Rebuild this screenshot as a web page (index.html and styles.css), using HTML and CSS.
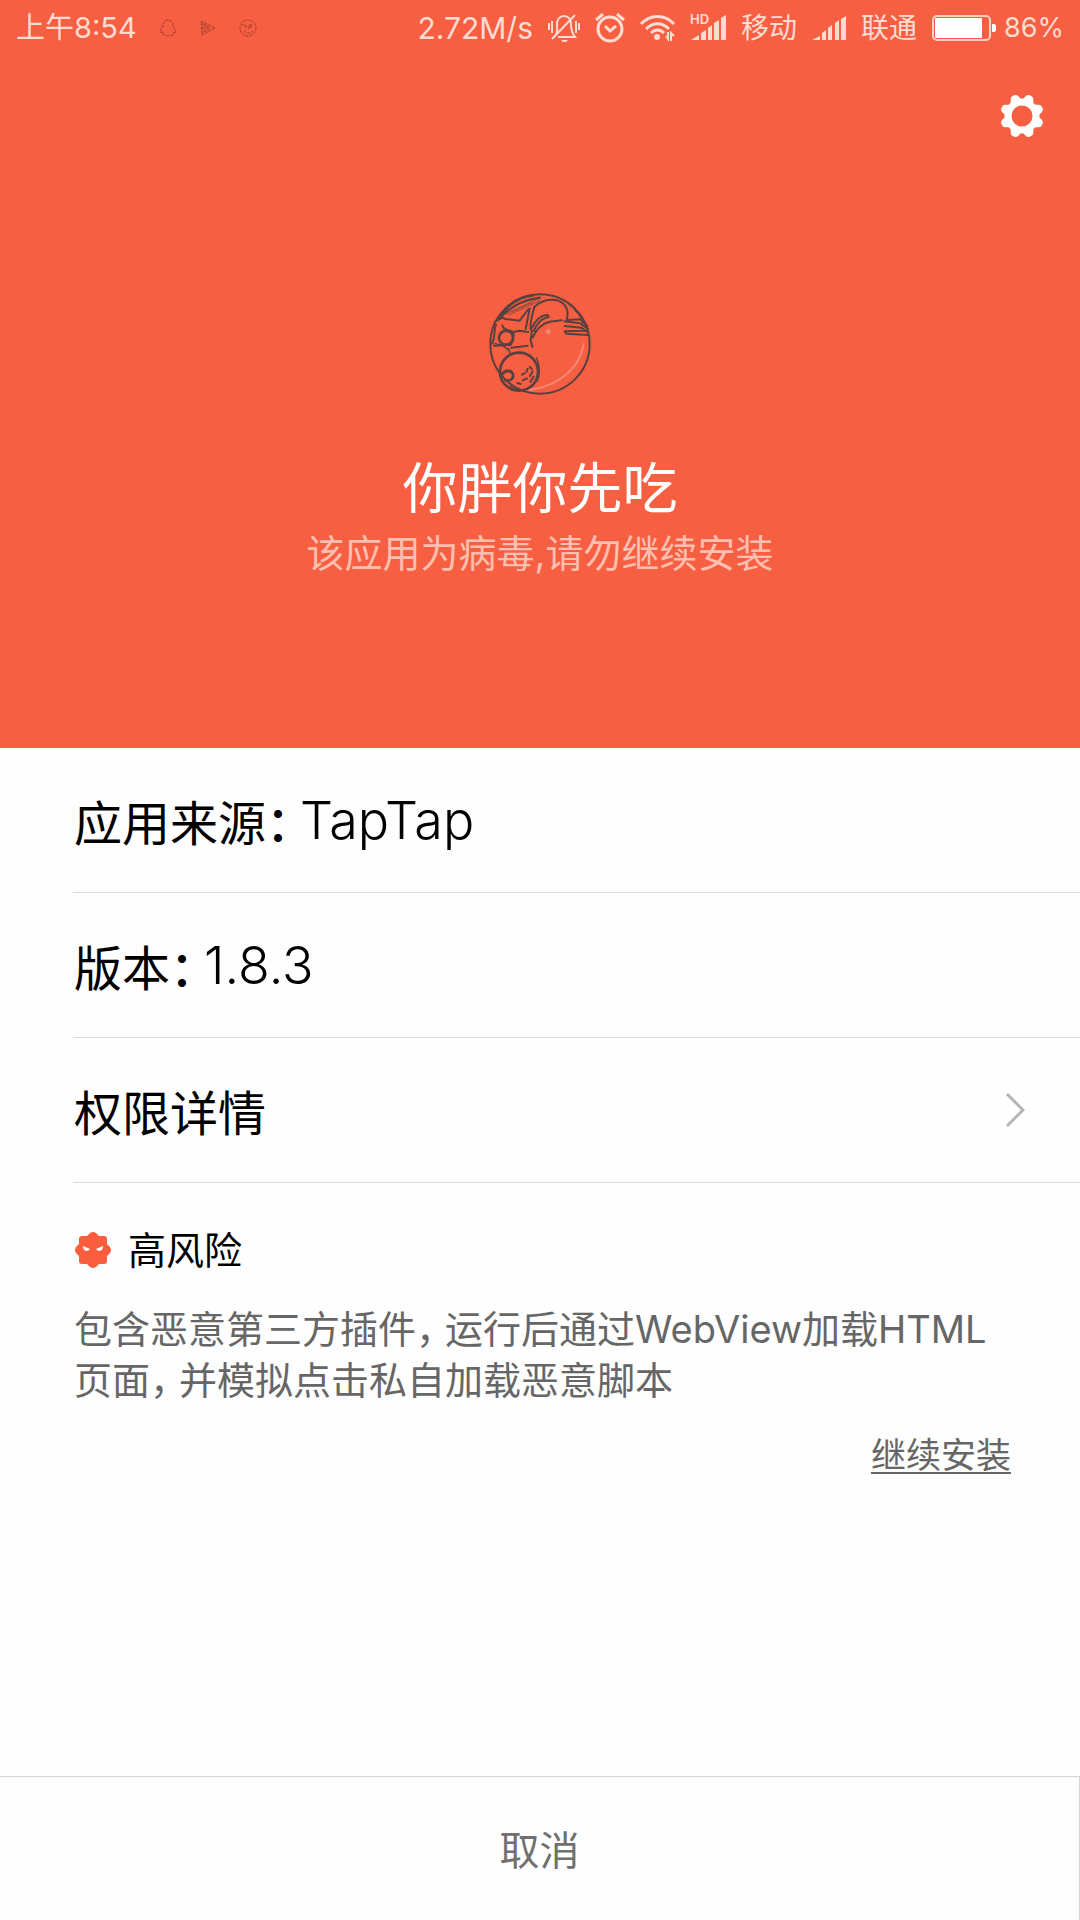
FILE: index.html
```html
<!DOCTYPE html>
<html lang="zh-CN">
  <head>
    <meta charset="utf-8" />
    <meta name="viewport" content="width=device-width" />
    <title>你胖你先吃</title>
    <link rel="stylesheet" href="styles.css">
  </head>

  <body>
    <header class="header">
      <div class="status">
        <div class="status-left">
          <span class="clock">上午8:54</span>
          <svg class="notif" width="18" height="18" viewBox="0 0 18 18">
            <path d="M9 1C5 1 4 4 4 7C2 10 1 12 2 14L4 13L5 16L8 17H11L14 16L15 13L17 14C17 11 15 9 14 7C14 3 12 1 9 1Z" />
          </svg>
          <svg class="notif" width="18" height="18" viewBox="0 0 18 18">
            <path d="M2 2L16 9L3 16ZM4 4V14M6 5L11 9L6 13ZM8 7V11" />
          </svg>
          <svg class="notif" width="18" height="18" viewBox="0 0 18 18">
            <circle cx="9" cy="9" r="8" />
            <path d="M3 6H7V10M10 10V6H14M12 6V10M5 12C8 15 11 15 14 12" />
          </svg>
        </div>
        <div class="status-right">
          <span class="speed">2.72M/s</span>
          <svg width="32" height="30" viewBox="0 0 32 30" fill="none" stroke="currentColor" stroke-width="2">
            <path d="M7 23C10 20 9 16 9 12C9 6 12 3 16 3C20 3 23 6 23 12C23 17 24 20 27 24H10M4 26L27 2" />
            <path d="M1 10V17M4 8V20M28 8V20M31 10V17" />
            <path d="M13 27H20L18 29H15Z" fill="currentColor" stroke="none" />
          </svg>
          <svg width="30" height="30" viewBox="0 0 30 30" fill="none" stroke="currentColor" stroke-width="3">
            <circle cx="15" cy="16" r="12" />
            <path d="M10 13L15 18L21 13M1 7L8 1M22 1L29 7" />
          </svg>
          <svg width="35" height="28" viewBox="0 0 35 28" fill="none" stroke="currentColor" stroke-width="3">
            <path d="M1 10C10 0 25 0 34 10M6 15C13 8 22 8 29 15M11 19C15 15 20 15 24 19" />
            <circle cx="17" cy="23" r="3" fill="currentColor" stroke="none" />
            <path d="M28 18V25L26 22M31 27V19L34 22" stroke-width="2" />
          </svg>
          <span class="signal">
            <span class="hd">HD</span>
            <svg width="36" height="28" viewBox="0 0 36 28" fill="currentColor">
              <path d="M1 26L9 21V26ZM11 19L16 16V26H11ZM18 14L22 11V26H18ZM24 9L29 6V26H24ZM31 4L36 1V26H31Z" />
            </svg>
          </span>
          <span>移动</span>
          <svg width="34" height="26" viewBox="0 0 34 26" fill="currentColor">
            <path d="M0 25L8 21V25ZM10 18L14 15V25H10ZM16 13L20 10V25H16ZM23 8L27 5V25H23ZM29 4L34 1V25H29Z" />
          </svg>
          <span>联通</span>
          <span class="power">
            <svg width="65" height="26" viewBox="0 0 65 26">
              <rect x="1" y="1" width="57" height="24" rx="4" fill="none" stroke="#ffcfc2" stroke-width="2" />
              <rect x="3" y="3" width="47" height="20" rx="1" fill="#fff" />
              <path d="M60 9H62Q64 9 64 11V15Q64 17 62 17H60Z" fill="#fff" />
            </svg>
            <span>86%</span>
          </span>
        </div>
      </div>

      <div class="toolbar">
        <button class="settings" type="button" aria-label="设置">
          <svg width="44" height="44" viewBox="-22 -22 44 44">
            <circle r="14" fill="none" stroke="#fff" stroke-width="7" />
            <g fill="#fff">
              <path id="tooth" d="M-6 -15L-4 -20Q-3 -22 -1 -22H1Q3 -22 4 -20L6 -15Z" transform="rotate(22.5)" />
              <use href="#tooth" transform="rotate(45)" />
              <use href="#tooth" transform="rotate(90)" />
              <use href="#tooth" transform="rotate(135)" />
              <use href="#tooth" transform="rotate(180)" />
              <use href="#tooth" transform="rotate(225)" />
              <use href="#tooth" transform="rotate(270)" />
              <use href="#tooth" transform="rotate(315)" />
            </g>
          </svg>
        </button>
      </div>

      <svg class="app-icon" width="102" height="102" viewBox="29 25 306 306" fill="none" stroke="#58413f" stroke-width="6" stroke-linecap="round" stroke-linejoin="round">
        <path d="M112 314C190 325 296 277 313 178" stroke="#f98572" />
        <circle cx="207" cy="141" r="8" fill="#f98572" stroke="#e9705b" stroke-width="3" />
        <circle cx="182" cy="178" r="149" />
        <path d="M64 92C90 58 120 36 160 33M58 104C92 68 125 47 181 39" stroke-width="7" />
        <path d="M84 86L176 43L180 49L88 91ZM100 80L158 54" stroke="#8d4e43" stroke-width="3" />
        <path d="M46 112L69 99L78 103L121 108L145 76L151 72L139 133M38 177C48 163 42 140 50 120" />
        <path d="M165 67C194 39 238 39 257 62C267 76 266 92 262 106L303 104L324 124" />
        <path d="M165 67C158 91 151 119 154 135C168 108 187 88 205 91L208 97C185 101 169 121 164 139M158 138L154 166L159 187M160 158C172 133 186 116 211 111L247 107" />
        <path d="M255 110L302 116L326 132M256 124L306 129L326 143M326 151L261 147L256 140L316 138" />
        <path d="M270 60C291 74 305 95 310 115M286 76L308 98" stroke-width="4" />
        <circle cx="80" cy="159" r="21" stroke-width="8" />
        <path d="M69 123L75 132L103 142L120 138L147 142M103 142L101 166L94 181L44 183M96 189L145 183" />
        <path d="M46 177L68 181L90 198M87 191L93 207" stroke-width="4" />
        <circle cx="119" cy="261" r="57" stroke-width="8" />
        <path d="M67 270C76 256 96 254 101 269C105 284 88 291 78 286" stroke-width="8" />
        <path d="M114 295L124 298M130 287L143 281M152 274L160 260M153 292L163 276M128 270L137 265M142 261L145 252M157 253L151 246" />
        <path d="M171 219C181 239 184 268 174 289M92 302C112 324 147 316 163 300" stroke-width="4" />
      </svg>

      <h1 class="app-name">你胖你先吃</h1>
      <p class="warning">该应用为病毒,请勿继续安装</p>
    </header>

    <main class="details">
      <div class="row">应用来源<span class="punct">：</span><span class="value">TapTap</span></div>
      <div class="row">版本<span class="punct">：</span><span class="value">1.8.3</span></div>
      <button class="row row-link" type="button">
        权限详情
        <svg width="20" height="36" viewBox="0 0 20 36" fill="none" stroke="#b4b4b4" stroke-width="3">
          <path d="M2 2L18 18L2 34" />
        </svg>
      </button>

      <section class="risk">
        <h2 class="risk-title">
          <svg width="38" height="38" viewBox="0 0 38 38">
            <path d="M16 2Q19 0 22 2L25 5H30Q33 5 33 8V13L36 16Q38 19 36 22L33 25V30Q33 33 30 33H25L22 36Q19 38 16 36L13 33H8Q5 33 5 30V25L2 22Q0 19 2 16L5 13V8Q5 5 8 5H13Z" fill="#fa5e3e" />
            <path d="M9 15L16 18Q15 20 12 20Q9 19 9 15ZM29 15L22 18Q23 20 26 20Q29 19 29 15Z" fill="#fff" />
          </svg>
          高风险
        </h2>
        <p class="risk-text">包含恶意第三方插件<span class="punct">，</span>运行后通过WebView加载HTML页面<span class="punct">，</span>并模拟点击私自加载恶意脚本</p>
        <a class="continue" href="#">继续安装</a>
      </section>
    </main>

    <button class="cancel" type="button">取消</button>
  </body>
</html>
```

FILE: styles.css
```css
* {
  box-sizing: border-box;
}
body {
  margin: 0;
  min-height: 100vh;
  display: flex;
  flex-direction: column;
  background: #fefefe;
  color: #000;
  font-family: Inter, "Noto Sans CJK SC", sans-serif;
}
h1,
h2,
p {
  margin: 0;
  font-weight: 400;
}
button {
  margin: 0;
  padding: 0;
  border: none;
  background: none;
  color: inherit;
  font: inherit;
}
svg {
  display: block;
  flex: none;
}

/* header */
.header {
  display: flex;
  flex-direction: column;
  align-items: center;
  padding-bottom: 170px;
  background: #f65f41;
  color: #fff;
}
.status {
  width: 100%;
  height: 56px;
  padding: 0 16px;
  display: flex;
  align-items: center;
  justify-content: space-between;
  color: #ffdcd2;
  font-size: 28px;
  line-height: 56px;
  white-space: nowrap;
}
.status-left {
  display: flex;
  align-items: center;
  gap: 22px;
}
.status-right {
  display: flex;
  align-items: center;
  gap: 15px;
}
.clock {
  font-size: 29px;
}
.notif {
  fill: none;
  stroke: #a43f2c;
  stroke-width: 1;
  stroke-dasharray: 3 1;
}
.speed {
  font-size: 30px;
}
.signal {
  position: relative;
}
.hd {
  position: absolute;
  top: -1px;
  left: 0;
  font-size: 13px;
  font-weight: 600;
  line-height: 13px;
}
.power {
  display: flex;
  align-items: center;
  gap: 7px;
  font-size: 27px;
}
.toolbar {
  width: 100%;
  padding: 38px 36px;
  display: flex;
  justify-content: flex-end;
}
.app-icon {
  margin-top: 117px;
}
.app-name {
  margin-top: 57px;
  font-size: 55px;
  line-height: 72px;
}
.warning {
  margin-top: 4px;
  color: #ffbfb0;
  font-size: 38px;
  line-height: 50px;
}

/* details */
.details {
  padding-left: 73px;
}
.row {
  display: flex;
  align-items: center;
  width: 100%;
  height: 145px;
  padding: 0 55px 0 1px;
  border-bottom: 1px solid #dcdcdc;
  font-size: 48px;
}
.row-link {
  justify-content: space-between;
}
.value {
  font-size: 52px;
  font-weight: 300;
}
/* half-width punctuation, kept close to the word before it */
.punct {
  margin-right: 10px;
  font-feature-settings: "halt";
}
.row .punct {
  font-weight: 500;
}
.risk {
  display: flex;
  flex-direction: column;
  padding: 42px 69px 0 1px;
}
.risk-title {
  display: flex;
  align-items: center;
  gap: 16px;
  font-size: 38px;
  line-height: 50px;
}
.risk-text {
  margin-top: 29px;
  color: #666;
  font-size: 38px;
  line-height: 51px;
}
.continue {
  align-self: flex-end;
  margin-top: 24px;
  color: #666;
  font-size: 35px;
  line-height: 50px;
  text-underline-offset: 4px;
  text-decoration-thickness: 2px;
}

/* bottom button */
.cancel {
  height: 144px;
  margin-top: auto;
  padding-bottom: 2px;
  border-top: 1px solid #d5d5d5;
  border-right: 1px solid #d5d5d5;
  color: #707070;
  font-size: 40px;
}
```
